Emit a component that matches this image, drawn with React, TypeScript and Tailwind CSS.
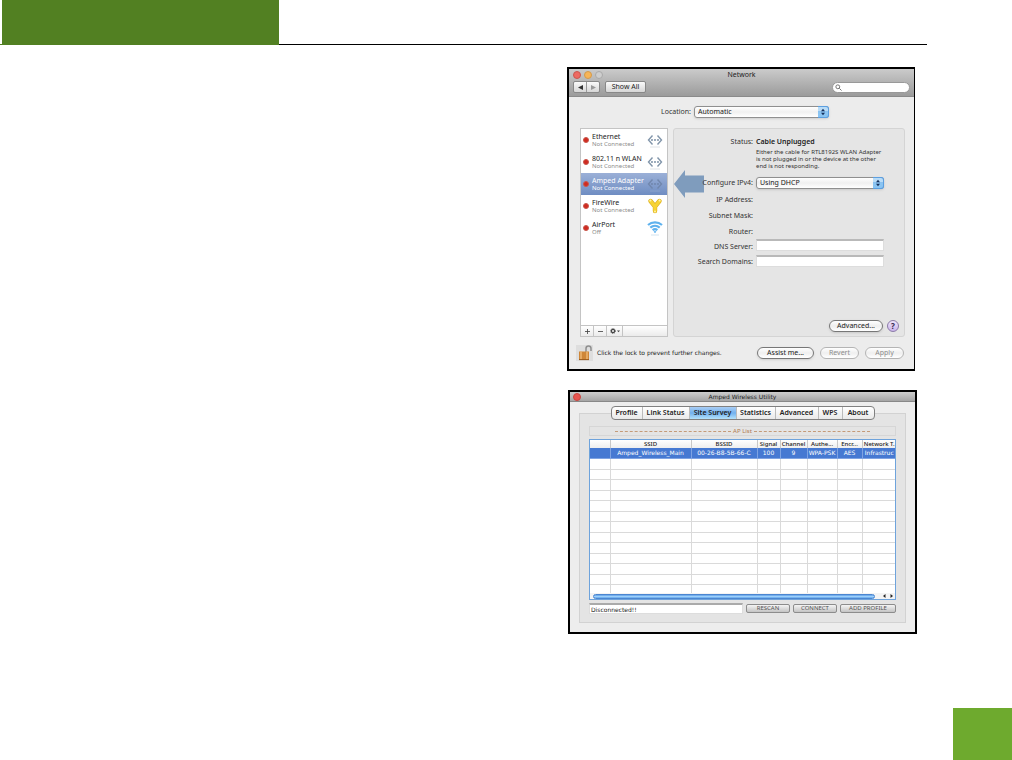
import { ReactNode } from "react";
import clsx from "clsx";

const services = [
  { name: "Ethernet", state: "Not Connected", icon: "ethernet" },
  { name: "802.11 n WLAN", state: "Not Connected", icon: "ethernet" },
  { name: "Amped Adapter", state: "Not Connected", icon: "ethernet", selected: true },
  { name: "FireWire", state: "Not Connected", icon: "firewire" },
  { name: "AirPort", state: "Off", icon: "airport" },
];

const tabs = [
  { name: "Profile", width: "w-[31px]" },
  { name: "Link Status", width: "w-[47px]" },
  { name: "Site Survey", width: "w-[47px]" },
  { name: "Statistics", width: "w-[39px]" },
  { name: "Advanced", width: "w-[43px]" },
  { name: "WPS", width: "w-[24px]" },
  { name: "About", width: "w-[31px]" },
];

const columns = [
  { name: "", value: "", width: "w-[20px]" },
  { name: "SSID", value: "Amped_Wireless_Main", width: "w-[81px]" },
  { name: "BSSID", value: "00-26-B8-5B-66-C", width: "w-[66px]" },
  { name: "Signal", value: "100", width: "w-[23px]" },
  { name: "Channel", value: "9", width: "w-[27px]" },
  { name: "Authe...", value: "WPA-PSK", width: "w-[30px]" },
  { name: "Encr...", value: "AES", width: "w-[25px]" },
  { name: "Network T.", value: "Infrastruc", width: "w-[34px]" },
];

const emptyRows = Array.from({ length: 13 }, (_, i) => i);

const ServiceIcon = ({ kind, selected }: { kind: string; selected?: boolean }) => {
  if (kind === "firewire") {
    return (
      <svg viewBox="0 0 16 18" className="h-[18px] w-4" fill="none">
        <path d="M3.5 4 8 9.5 12.5 4M8 9v5" stroke="#d9ac22" strokeWidth="4.400" strokeLinecap="round" />
        <path d="M3.5 4 8 9.5 12.5 4M8 9v5" stroke="#f7d333" strokeWidth="3.400" strokeLinecap="round" />
        <circle cx="3.4" cy="3.6" r="1" fill="#fff3a8" />
        <circle cx="12.6" cy="3.6" r="1" fill="#fff3a8" />
        <circle cx="8" cy="14.4" r="1" fill="#fff3a8" />
      </svg>
    );
  }
  if (kind === "airport") {
    return (
      <svg viewBox="0 0 16 18" className="h-[18px] w-4" fill="none" stroke="#5fb2ee" strokeWidth="2.200">
        <path d="M1 6c4-3.6 10-3.6 14 0" />
        <path d="M3.3 8.700c2.800-2.400 6.600-2.400 9.400 0" />
        <path d="M5.600 11.200c1.500-1.200 3.300-1.200 4.800 0" />
        <path d="M7 12.200h2L8 14z" fill="#5fb2ee" strokeWidth=".6" />
        <path d="M4 16h8" stroke="#d4e3ee" strokeWidth="1" />
      </svg>
    );
  }
  return (
    <svg
      viewBox="0 0 16 18"
      className="h-[18px] w-4"
      fill="none"
      stroke={selected ? "#7187ad" : "#8195aa"}
      strokeWidth="1.400"
    >
      <path d="M5.500 4.500 1.500 9l4 4.500M10.500 4.500l4 4.500-4 4.500" />
      <circle cx="5" cy="9" r=".4" />
      <circle cx="8" cy="9" r=".4" />
      <circle cx="11" cy="9" r=".4" />
      <path d="M3 16h10" stroke={selected ? "#8ba3cc" : "#dfe3e8"} strokeWidth="1" />
    </svg>
  );
};

const Light = ({ color }: { color: string }) => (
  <span className={clsx("h-2 w-2 rounded-full border", color)} />
);

const Popup = ({ id, value, className }: { id: string; value: string; className: string }) => (
  <div className={clsx("relative h-3", className)}>
    <select
      id={id}
      className="block h-3 w-full appearance-none rounded-[3px] border border-[#8f8f8f] bg-gradient-to-b from-white via-[#f0f0f0] to-white pl-[3px] text-[7px] leading-[10px] text-[#222] shadow-sm"
    >
      <option>{value}</option>
    </select>
    <svg viewBox="0 0 11 12" className="pointer-events-none absolute top-0 right-0 h-3 w-[11px]">
      <path d="M0 0h8.500q2.500 0 2.500 3v6q0 3-2.500 3H0z" fill="#5c9fe0" />
      <path d="M0 1h8q2 0 2 2v2.500H0z" fill="#b9dcf7" />
      <path d="M0 5.500h10V9q0 2-2 2H0z" fill="#8ac4f2" />
      <path d="M5 2.800 7 5.300H3zM5 9.200 3 6.700h4z" fill="#16305c" />
    </svg>
  </div>
);

const PillButton = ({ children, className, disabled }: { children: ReactNode; className: string; disabled?: boolean }) => (
  <button
    disabled={disabled}
    className={clsx(
      "h-3 rounded-full border bg-gradient-to-b from-white via-[#efefef] to-white text-center text-[7px] leading-[10px] whitespace-nowrap",
      disabled ? "border-[#b4b4b4] text-[#8c8c8c]" : "border-[#777] text-[#222] shadow-sm",
      className,
    )}
  >
    {children}
  </button>
);

const NetworkWindow = () => (
  <section className="mr-[2px] border-2 border-r border-black bg-[#ececec] text-[#333]">
    <header className="h-7 border-b border-[#8a8a8a] bg-gradient-to-b from-[#cbcbcb] to-[#9b9b9b] px-1">
      <div className="grid h-[11px] grid-cols-3 items-center">
        <div className="flex gap-[3px]">
          <Light color="border-[#c9564f] bg-[#ee6a62]" />
          <Light color="border-[#d39a4c] bg-[#f7b558]" />
          <Light color="border-[#a9a9a9] bg-[#cecece]" />
        </div>
        <h2 className="text-center text-[7px] leading-[10px] text-[#222]">Network</h2>
      </div>
      <div className="flex h-[14px] items-center">
        <div className="flex h-3 w-[27px] divide-x divide-[#999] rounded-[2px] border border-[#888] bg-gradient-to-b from-[#fafafa] to-[#d6d6d6]">
          <button aria-label="Back" className="flex flex-1 items-center justify-center">
            <svg viewBox="0 0 6 6" className="h-[5px] w-[5px]"><path d="M6 0v6L0 3z" fill="#333" /></svg>
          </button>
          <button aria-label="Forward" className="flex flex-1 items-center justify-center">
            <svg viewBox="0 0 6 6" className="h-[5px] w-[5px]"><path d="M0 0v6l6-3z" fill="#999" /></svg>
          </button>
        </div>
        <button className="ml-[5px] h-3 w-[41px] rounded-[2px] border border-[#888] bg-gradient-to-b from-[#fafafa] to-[#d6d6d6] text-[7px] leading-[10px] text-[#222]">
          Show All
        </button>
        <label className="ml-auto flex h-[11px] w-[78px] items-center rounded-full border border-[#999] bg-white pl-[2px]">
          <svg viewBox="0 0 8 8" className="h-[7px] w-[7px] shrink-0" fill="none" stroke="#666" strokeWidth="1">
            <circle cx="3.200" cy="3.200" r="2.200" />
            <path d="m5 5 2.500 2.500" />
          </svg>
          <input aria-label="Search" className="h-2 w-full min-w-0 text-[7px] outline-none" />
        </label>
      </div>
    </header>

    <div className="flex items-center gap-[3px] pt-[9px] pl-[92px]">
      <label htmlFor="location" className="text-[7px] leading-3">Location:</label>
      <Popup id="location" value="Automatic" className="w-[135px]" />
    </div>

    <div className="mt-[10px] mr-[9px] ml-[11px] flex gap-[5px]">
      <div className="flex h-[209px] w-[88px] shrink-0 flex-col border border-[#c4c4c4] bg-white">
        <ul>
          {services.map((s) => (
            <li
              key={s.name}
              className={clsx(
                "flex h-[22px] items-center pr-1 pl-[2px]",
                s.selected && "bg-gradient-to-b from-[#9bb0d7] to-[#6f8dc2] text-white",
              )}
            >
              <span className="h-[6px] w-[6px] shrink-0 rounded-full border border-[#c8574c] bg-[#d02a20]" />
              <div className="ml-[3px] flex-1 whitespace-nowrap">
                <p className={clsx("text-[7px] leading-2", s.selected ? "text-white" : "text-[#222]")}>{s.name}</p>
                <p className={clsx("text-[6px] leading-[6px]", s.selected ? "text-white" : "text-[#8c8c8c]")}>
                  {s.state}
                </p>
              </div>
              <ServiceIcon kind={s.icon} selected={s.selected} />
            </li>
          ))}
        </ul>
        <div className="mt-auto flex h-[11px] divide-x divide-[#c4c4c4] border-t border-[#c4c4c4] bg-gradient-to-b from-white to-[#ebebeb] text-[#444]">
          <button aria-label="Add" className="flex w-[13px] items-center justify-center">
            <svg viewBox="0 0 6 6" className="h-[5px] w-[5px]" stroke="currentColor"><path d="M3 0v6M0 3h6" /></svg>
          </button>
          <button aria-label="Remove" className="flex w-[13px] items-center justify-center">
            <svg viewBox="0 0 6 6" className="h-[5px] w-[5px]" stroke="currentColor"><path d="M0 3h6" /></svg>
          </button>
          <button aria-label="Actions" className="flex w-4 items-center justify-center">
            <svg viewBox="0 0 10 6" className="h-[6px] w-[10px]" fill="none" stroke="currentColor">
              <circle cx="3" cy="3" r="1.600" strokeWidth="1.200" />
              <circle cx="3" cy="3" r="2.500" strokeWidth=".8" strokeDasharray="1 1" />
              <path d="M7 2.500h3L8.500 4.200z" fill="currentColor" stroke="none" />
            </svg>
          </button>
          <span className="flex-1" />
        </div>
      </div>

      <div className="relative flex min-w-0 flex-1 flex-col rounded-[3px] border border-[#d4d4d4] bg-[#e5e5e5] text-[7px] leading-2">
        {/* callout arrow towards the selected adapter */}
        <svg viewBox="0 0 30 28" className="absolute top-[41px] left-0 h-7 w-[30px]">
          <path d="M0 14 11 0v5.500h19v17H11V28z" fill="#7f9cbd" />
        </svg>
        <dl className="relative mt-[9px] grid grid-cols-[79px_1fr] gap-x-[3px]">
          <dt className="text-right">Status:</dt>
          <dd className="h-[39px]">
            <p className="font-semibold text-[#222]">Cable Unplugged</p>
            <p className="mt-[3px] text-[6px] leading-[7px] whitespace-nowrap">
              Either the cable for RTL8192S WLAN Adapter
              <br />
              is not plugged in or the device at the other
              <br />
              end is not responding.
            </p>
          </dd>
          <dt className="text-right leading-3 whitespace-nowrap">
            <label htmlFor="ipv4">Configure IPv4:</label>
          </dt>
          <dd>
            <Popup id="ipv4" value="Using DHCP" className="w-[128px]" />
          </dd>
          <dt className="pt-[7px] text-right">IP Address:</dt>
          <dd />
          <dt className="pt-2 text-right">Subnet Mask:</dt>
          <dd />
          <dt className="pt-2 text-right">Router:</dt>
          <dd />
          <dt className="pt-[3px] text-right leading-4">
            <label htmlFor="dns">DNS Server:</label>
          </dt>
          <dd className="pt-[3px]">
            <input id="dns" className="block h-3 w-[128px] border border-t-2 border-[#ddd] border-t-[#b9b9b9] bg-white px-[2px]" />
          </dd>
          <dt className="text-right leading-[13px] whitespace-nowrap">
            <label htmlFor="domains">Search Domains:</label>
          </dt>
          <dd>
            <input id="domains" className="block h-3 w-[128px] border border-t-2 border-[#ddd] border-t-[#b9b9b9] bg-white px-[2px]" />
          </dd>
        </dl>
        <div className="mt-auto mr-[5px] mb-1 flex items-center justify-end gap-1">
          <PillButton className="w-[54px]">Advanced...</PillButton>
          <button
            aria-label="Help"
            className="h-3 w-3 rounded-full border border-[#8b7aa8] bg-gradient-to-b from-[#efe6fb] to-[#c9b3ea] text-center text-[8px] leading-[10px] font-bold text-[#33264a]"
          >
            ?
          </button>
        </div>
      </div>
    </div>

    <footer className="flex h-8 items-center pr-[10px] pl-[7px]">
      <svg viewBox="0 0 18 18" className="h-[18px] w-[18px]" fill="none">
        <path d="M0 1h17v16H0z" fill="#dedede" />
        <path d="M10 9V4.500q0-2.500 2.500-2.500T15 4.500V7" stroke="#8f8f8f" strokeWidth="1.500" />
        <path d="M3 7.500h10V16H3z" fill="#cf8637" />
        <path d="M5 7.500v8.500M11 7.500v8.500" stroke="#edb673" strokeWidth="1.500" />
        <path d="M3 15.600h10" stroke="#9a5a1c" />
      </svg>
      <p className="ml-[3px] flex-1 font-['DejaVu_Sans',sans-serif] text-[6px] leading-2 whitespace-nowrap text-[#222]">
        Click the lock to prevent further changes.
      </p>
      <div className="flex gap-[6px]">
        <PillButton className="w-[57px]">Assist me...</PillButton>
        <PillButton className="w-[39px]" disabled>Revert</PillButton>
        <PillButton className="w-[39px]" disabled>Apply</PillButton>
      </div>
    </footer>
  </section>
);

const UtilityButton = ({ children, className }: { children: ReactNode; className: string }) => (
  <button
    className={clsx(
      "h-[9px] rounded-[2px] border border-[#8c8c8c] bg-gradient-to-b from-[#f4f4f4] to-[#c4c4c4] text-center text-[6px] leading-[7px] whitespace-nowrap text-[#555]",
      className,
    )}
  >
    {children}
  </button>
);

const UtilityWindow = () => (
  <section className="ml-px border-2 border-black bg-[#ededed] text-[#222]">
    <header className="grid h-[10px] grid-cols-[1fr_2fr_1fr] items-center border-b border-[#888] bg-gradient-to-b from-[#cdcdcd] to-[#a4a4a4] px-[3px]">
      <Light color="border-[#c9453f] bg-[#e8544f]" />
      <h2 className="text-center font-['DejaVu_Sans',sans-serif] text-[6px] leading-2">Amped Wireless Utility</h2>
    </header>

    <div className="px-[9px] pt-[11px] pb-[9px]">
      <div className="border border-[#d2d2d2] bg-[#e4e4e4] px-[9px] pb-2">
        <nav className="-mt-2 flex justify-center">
          <div className="flex h-[14px] overflow-hidden rounded-[4px] border border-[#808080] bg-gradient-to-b from-white to-[#e9e9e9]">
            {tabs.map((t) => (
              <button
                key={t.name}
                className={clsx(
                  "border-r border-[#bbb] text-center text-[7px] leading-3 font-semibold whitespace-nowrap last:border-r-0",
                  t.width,
                  t.name === "Site Survey" && "bg-gradient-to-b from-[#a9cdf4] via-[#72b1ee] to-[#b4e2fb]",
                )}
              >
                {t.name}
              </button>
            ))}
          </div>
        </nav>

        <p className="mt-[6px] flex h-[10px] items-center justify-center gap-[2px] border border-[#d6d6d6] text-[6px] leading-2 whitespace-nowrap text-[#b07a50]">
          <span className="w-[116px] border-t border-dashed border-[#c49a78]" />
          AP List
          <span className="w-[116px] border-t border-dashed border-[#c49a78]" />
        </p>

        <div className="mt-[3px] h-[161px] overflow-hidden border border-[#6ea3dc] bg-white">
          <div className="h-[153px] overflow-hidden">
            <table className="w-full table-fixed border-collapse text-[6px]">
              <thead>
                <tr className="h-2 bg-gradient-to-b from-white to-[#eee]">
                  {columns.map((c, i) => (
                    <th
                      key={i}
                      className={clsx(
                        "border-r border-[#c8c8c8] p-0 text-center leading-2 font-medium whitespace-nowrap last:border-r-0",
                        c.width,
                      )}
                    >
                      {c.name}
                    </th>
                  ))}
                </tr>
              </thead>
              <tbody>
                <tr className="h-[10px] bg-[#4679d2] text-white">
                  {columns.map((c, i) => (
                    <td
                      key={i}
                      className="border-r border-b border-[#7fa3e2] p-0 text-center font-['DejaVu_Sans',sans-serif] leading-[9px] whitespace-nowrap last:border-r-0"
                    >
                      {c.value}
                    </td>
                  ))}
                </tr>
                {emptyRows.map((r) => (
                  <tr key={r} className="odd:h-[10px] even:h-[11px]">
                    {columns.map((_, i) => (
                      <td key={i} className="border-r border-b border-[#dadada] p-0 last:border-r-0" />
                    ))}
                  </tr>
                ))}
              </tbody>
            </table>
          </div>
          <div className="flex h-[6px] items-center gap-[3px] bg-[#f4f4f4] pr-px pl-[3px]">
            <div className="h-[5px] flex-1 rounded-full border border-[#4b86d0] bg-gradient-to-b from-[#5c9be6] via-[#9dd0fa] to-[#5fa5ec]" />
            <svg viewBox="0 0 16 6" className="h-[6px] w-4">
              <path d="M7.500 1v4L5 3zM12.500 1v4L15 3z" fill="#222" />
            </svg>
          </div>
        </div>

        <div className="mt-[3px] flex items-center">
          <input
            aria-label="Status"
            readOnly
            value="Disconnected!!"
            className="h-[11px] min-w-0 flex-1 border border-t-2 border-[#ddd] border-t-[#aaa] bg-white pl-px font-['DejaVu_Sans',sans-serif] text-[6px] leading-2 outline-none"
          />
          <UtilityButton className="ml-[3px] w-11">RESCAN</UtilityButton>
          <UtilityButton className="ml-[3px] w-11">CONNECT</UtilityButton>
          <UtilityButton className="ml-[3px] w-14">ADD PROFILE</UtilityButton>
        </div>
      </div>
    </div>
  </section>
);

const App = () => {
  return (
    <div className="flex min-h-screen flex-col bg-white font-['Noto_Sans',sans-serif]">
      <header className="flex h-[45px] pr-[85px]">
        <div className="w-[2px] border-b border-[#528022]" />
        <div className="w-[277px] bg-[#528022]" />
        <div className="flex-1 border-b border-black" />
      </header>
      <main className="flex flex-1 justify-end pt-[22px] pr-[95px]">
        <div className="flex w-[350px] flex-col gap-[19px]">
          <NetworkWindow />
          <UtilityWindow />
        </div>
      </main>
      <footer className="flex justify-end">
        <div className="h-[52px] w-[59px] bg-[#6eaa2e]" />
      </footer>
    </div>
  );
};

export default App;
